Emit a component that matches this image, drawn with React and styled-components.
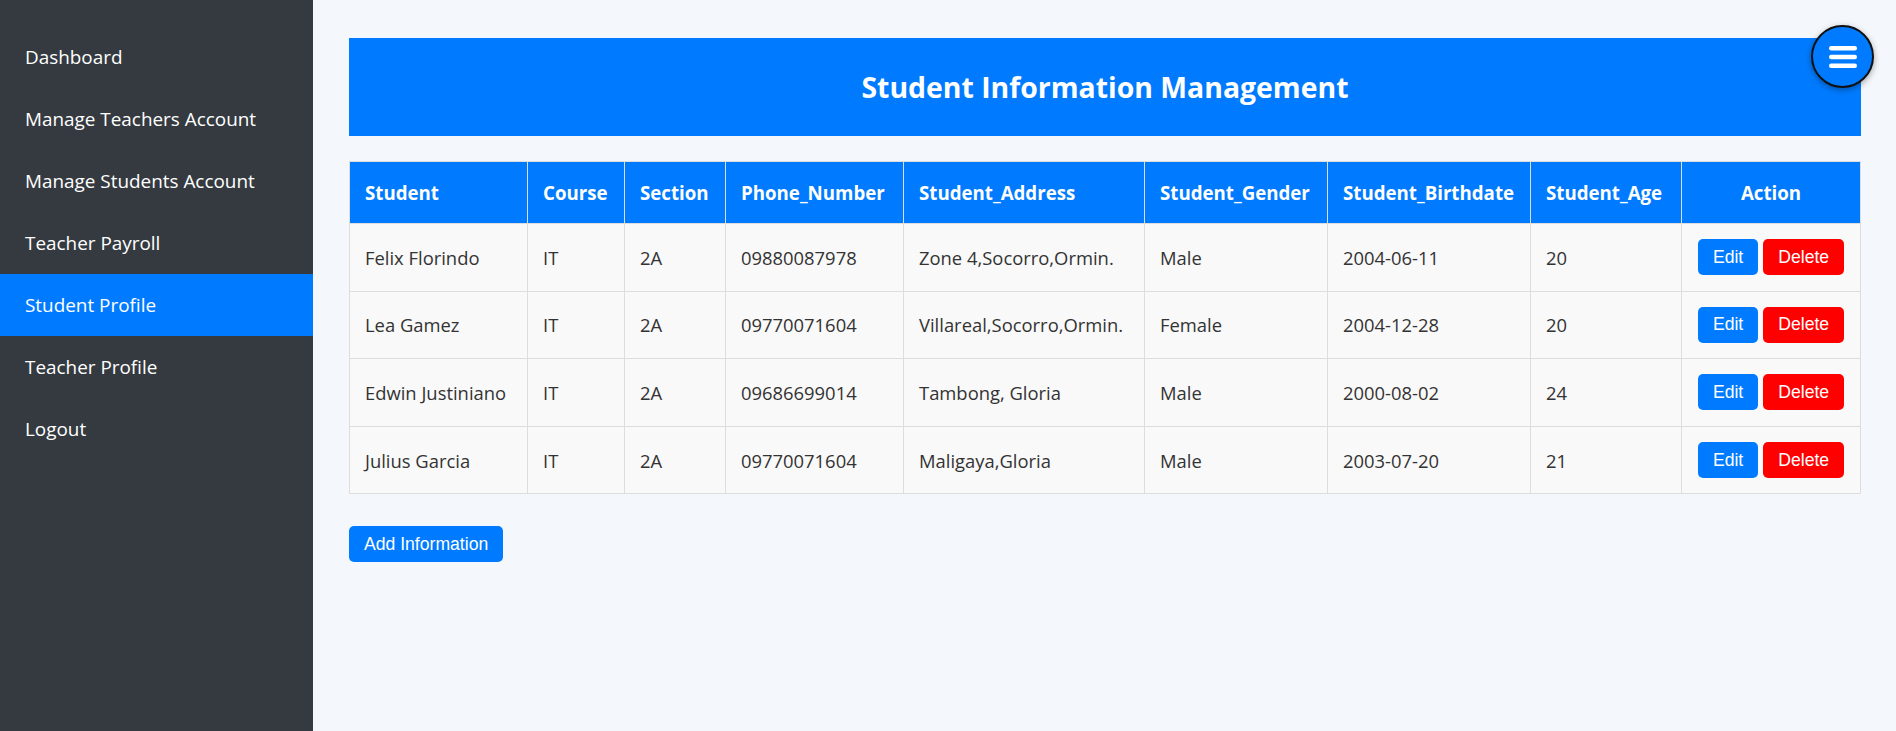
import React from 'react';
import styled, { createGlobalStyle } from 'styled-components';

const GlobalStyle = createGlobalStyle`
  body {
    margin: 0;
    font-family: 'Segoe UI', 'Open Sans', 'Noto Sans', sans-serif;
    background-color: #f4f7fc;
  }
`;

const Layout = styled.div`
  display: flex;
  min-height: 100vh;
`;

const Sidebar = styled.nav`
  width: 313px;
  flex-shrink: 0;
  background-color: #343a40;
  padding-top: 26px;
  box-sizing: border-box;
`;

const NavItem = styled.a`
  display: block;
  height: 62px;
  line-height: 62px;
  padding: 0 25px;
  color: #fff;
  font-size: 18.9px;
  text-decoration: none;
  background-color: ${(props) => (props.$active ? '#007bff' : 'transparent')};
`;

const Main = styled.main`
  flex: 1;
  padding: 38px 36px;
`;

const Header = styled.div`
  height: 98px;
  background-color: #007bff;
  display: flex;
  align-items: center;
  justify-content: center;
`;

const Title = styled.h1`
  margin: 0;
  color: #fff;
  font-size: 28.4px;
  font-weight: 700;
`;

const MenuToggle = styled.button`
  position: fixed;
  top: 25px;
  right: 22px;
  width: 63px;
  height: 63px;
  border-radius: 50%;
  background-color: #007bff;
  border: 2px solid #111;
  box-shadow: 0 2px 6px rgba(0, 0, 0, 0.35);
  display: flex;
  align-items: center;
  justify-content: center;
  padding: 0;
  cursor: pointer;
`;

const Table = styled.table`
  width: 100%;
  margin-top: 25px;
  border-collapse: collapse;
  table-layout: fixed;
  background-color: #f9f9f9;
`;

const Th = styled.th`
  height: 61px;
  padding: 0 15px;
  background-color: #007bff;
  color: #fff;
  font-size: 18.7px;
  font-weight: 700;
  text-align: ${(props) => (props.$center ? 'center' : 'left')};
  border: 1px solid #ddd;
  white-space: nowrap;
`;

const Td = styled.td`
  height: 66.6px;
  padding: 0 15px;
  color: #333;
  font-size: 18.4px;
  border: 1px solid #ddd;
  text-align: ${(props) => (props.$center ? 'center' : 'left')};
  white-space: nowrap;
`;

const Button = styled.button`
  height: 36px;
  padding: 0 15px;
  border: none;
  border-radius: 5px;
  color: #fff;
  font-family: 'Liberation Sans', Arial, sans-serif;
  font-size: 17.6px;
  background-color: ${(props) => (props.$danger ? '#ff0000' : '#007bff')};
  cursor: pointer;
  & + & {
    margin-left: 5px;
  }
`;

const AddButton = styled(Button)`
  margin-top: 32px;
`;

const columns = [
  ['Student', 178],
  ['Course', 97],
  ['Section', 101],
  ['Phone_Number', 178],
  ['Student_Address', 241],
  ['Student_Gender', 183],
  ['Student_Birthdate', 203],
  ['Student_Age', 151],
  ['Action', 179],
];

const students = [
  ['Felix Florindo', 'IT', '2A', '09880087978', 'Zone 4,Socorro,Ormin.', 'Male', '2004-06-11', '20'],
  ['Lea Gamez', 'IT', '2A', '09770071604', 'Villareal,Socorro,Ormin.', 'Female', '2004-12-28', '20'],
  ['Edwin Justiniano', 'IT', '2A', '09686699014', 'Tambong, Gloria', 'Male', '2000-08-02', '24'],
  ['Julius Garcia', 'IT', '2A', '09770071604', 'Maligaya,Gloria', 'Male', '2003-07-20', '21'],
];

const navLinks = [
  'Dashboard',
  'Manage Teachers Account',
  'Manage Students Account',
  'Teacher Payroll',
  'Student Profile',
  'Teacher Profile',
  'Logout',
];

const BarsIcon = () => (
  <svg width="28" height="24" viewBox="0 0 28 24">
    <rect x="0" y="1" width="28" height="4.4" rx="2.2" fill="#fff" />
    <rect x="0" y="9.8" width="28" height="4.4" rx="2.2" fill="#fff" />
    <rect x="0" y="18.6" width="28" height="4.4" rx="2.2" fill="#fff" />
  </svg>
);

const App = () => {
  return (
    <Layout>
      <GlobalStyle />
      <Sidebar>
        {navLinks.map((link) => (
          <NavItem key={link} href="#" $active={link === 'Student Profile'}>
            {link}
          </NavItem>
        ))}
      </Sidebar>
      <Main>
        <Header>
          <Title>Student Information Management</Title>
        </Header>
        <Table>
          <colgroup>
            {columns.map(([name, w]) => (
              <col key={name} style={{ width: w }} />
            ))}
          </colgroup>
          <thead>
            <tr>
              {columns.map(([name]) => (
                <Th key={name} $center={name === 'Action'}>
                  {name}
                </Th>
              ))}
            </tr>
          </thead>
          <tbody>
            {students.map((row, i) => (
              <tr key={i}>
                {row.map((cell, j) => (
                  <Td key={j}>{cell}</Td>
                ))}
                <Td $center>
                  <Button>Edit</Button>
                  <Button $danger>Delete</Button>
                </Td>
              </tr>
            ))}
          </tbody>
        </Table>
        <AddButton>Add Information</AddButton>
      </Main>
      <MenuToggle aria-label="menu">
        <BarsIcon />
      </MenuToggle>
    </Layout>
  );
};

export default App;
